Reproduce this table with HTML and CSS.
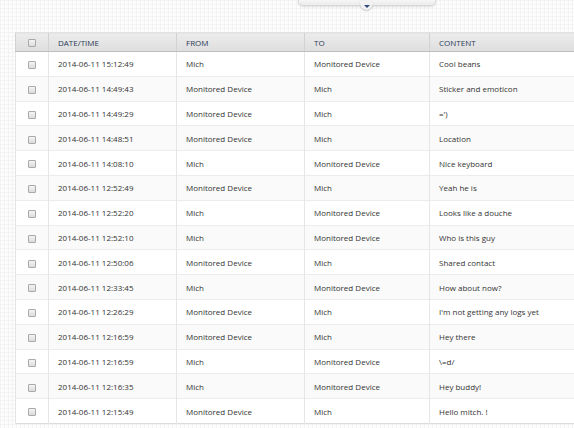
FILE: index.html
```html
<!DOCTYPE html>
<html>
<head>
<meta charset="utf-8">
<link rel="stylesheet" href="styles.css">
</head>
<body>
<div class="page">
  <div class="pull">
    <div class="pull-bar"></div>
    <div class="pull-tab"><span class="arrow"></span></div>
  </div>
  <div class="wrap">
    <table class="log">
      <colgroup>
        <col class="c-chk"><col class="c-date"><col class="c-from"><col class="c-to"><col class="c-content">
      </colgroup>
      <thead>
        <tr><th class="chk"><span class="box"></span></th><th>DATE/TIME</th><th>FROM</th><th>TO</th><th>CONTENT</th></tr>
      </thead>
      <tbody>
        <tr><td class="chk"><span class="box"></span></td><td>2014-06-11 15:12:49</td><td>Mich</td><td>Monitored Device</td><td>Cool beans</td></tr>
        <tr><td class="chk"><span class="box"></span></td><td>2014-06-11 14:49:43</td><td>Monitored Device</td><td>Mich</td><td>Sticker and emoticon</td></tr>
        <tr><td class="chk"><span class="box"></span></td><td>2014-06-11 14:49:29</td><td>Monitored Device</td><td>Mich</td><td>=')</td></tr>
        <tr><td class="chk"><span class="box"></span></td><td>2014-06-11 14:48:51</td><td>Monitored Device</td><td>Mich</td><td>Location</td></tr>
        <tr><td class="chk"><span class="box"></span></td><td>2014-06-11 14:08:10</td><td>Mich</td><td>Monitored Device</td><td>Nice keyboard</td></tr>
        <tr><td class="chk"><span class="box"></span></td><td>2014-06-11 12:52:49</td><td>Monitored Device</td><td>Mich</td><td>Yeah he is</td></tr>
        <tr><td class="chk"><span class="box"></span></td><td>2014-06-11 12:52:20</td><td>Mich</td><td>Monitored Device</td><td>Looks like a douche</td></tr>
        <tr><td class="chk"><span class="box"></span></td><td>2014-06-11 12:52:10</td><td>Mich</td><td>Monitored Device</td><td>Who is this guy</td></tr>
        <tr><td class="chk"><span class="box"></span></td><td>2014-06-11 12:50:06</td><td>Monitored Device</td><td>Mich</td><td>Shared contact</td></tr>
        <tr><td class="chk"><span class="box"></span></td><td>2014-06-11 12:33:45</td><td>Mich</td><td>Monitored Device</td><td>How about now?</td></tr>
        <tr><td class="chk"><span class="box"></span></td><td>2014-06-11 12:26:29</td><td>Monitored Device</td><td>Mich</td><td>I'm not getting any logs yet</td></tr>
        <tr><td class="chk"><span class="box"></span></td><td>2014-06-11 12:16:59</td><td>Monitored Device</td><td>Mich</td><td>Hey there</td></tr>
        <tr><td class="chk"><span class="box"></span></td><td>2014-06-11 12:16:59</td><td>Mich</td><td>Monitored Device</td><td>\=d/</td></tr>
        <tr><td class="chk"><span class="box"></span></td><td>2014-06-11 12:16:35</td><td>Mich</td><td>Monitored Device</td><td>Hey buddy!</td></tr>
        <tr><td class="chk"><span class="box"></span></td><td>2014-06-11 12:15:49</td><td>Monitored Device</td><td>Mich</td><td>Hello mitch. !</td></tr>
      </tbody>
    </table>
  </div>
</div>
</body>
</html>
```
FILE: styles.css
```css
html, body {
  margin: 0;
  padding: 0;
  width: 574px;
  height: 428px;
  overflow: hidden;
}
body {
  background-color: #fdfdfd;
  background-image:
    linear-gradient(to right, #f3f3f3 1px, transparent 1px),
    linear-gradient(to bottom, #f3f3f3 1px, transparent 1px);
  background-size: 4px 4px;
  font-family: "Open Sans", "Noto Sans", sans-serif;
  color: #333;
}
.page {
  position: relative;
  width: 574px;
  height: 428px;
}
.pull {
  position: absolute;
  left: 298px;
  top: 0;
  width: 138px;
  height: 14px;
}
.pull-bar {
  height: 5px;
  background: linear-gradient(#f6f6f6, #ececec);
  border: 1px solid #d8d8d8;
  border-top: none;
  border-radius: 0 0 5px 5px;
  box-shadow: 0 1px 2px rgba(0,0,0,0.12);
}
.pull-tab {
  position: absolute;
  left: 62px;
  top: 0;
  width: 13px;
  height: 10px;
  background: #f2f2f2;
  border-radius: 0 0 7px 7px;
  box-shadow: 0 1px 1px rgba(0,0,0,0.2);
  display: flex;
  justify-content: center;
  align-items: flex-end;
}
.arrow {
  width: 0;
  height: 0;
  border-left: 3px solid transparent;
  border-right: 3px solid transparent;
  border-top: 3px solid #2e4a7a;
  margin-bottom: 2px;
}
.wrap {
  padding: 32px 0 0 15px;
}
.log {
  width: 559px;
  table-layout: fixed;
  border-collapse: collapse;
  font-size: 8px;
  background: #fff;
  border-left: 1px solid #dcdcdc;
  border-bottom: 1px solid #dcdcdc;
}
.c-chk { width: 33px; }
.c-date { width: 128px; }
.c-from { width: 128px; }
.c-to { width: 125px; }
.log th {
  height: 18px;
  padding: 0 0 0 9px;
  text-align: left;
  font-weight: normal;
  color: #2b3a55;
  background: linear-gradient(#ececec, #dedede);
  border-bottom: 1px solid #bdbdbd;
  border-left: 1px solid #d2d2d2;
  border-top: 1px solid #e2e2e2;
}
.log td {
  height: 24.8px;
  box-sizing: border-box;
  padding: 0 0 0 9px;
  border-left: 1px solid #e6e6e6;
  border-top: 1px solid #ececec;
  white-space: nowrap;
  overflow: hidden;
  color: #333;
}
.log tbody tr:nth-child(even) td { background: #fafafa; }
.log .chk {
  padding: 0;
  text-align: center;
}
.box {
  display: inline-block;
  width: 6px;
  height: 6px;
  border: 1px solid #a9a9a9;
  border-radius: 1px;
  background: linear-gradient(#f4f4f4, #dcdcdc);
  vertical-align: middle;
}
```
